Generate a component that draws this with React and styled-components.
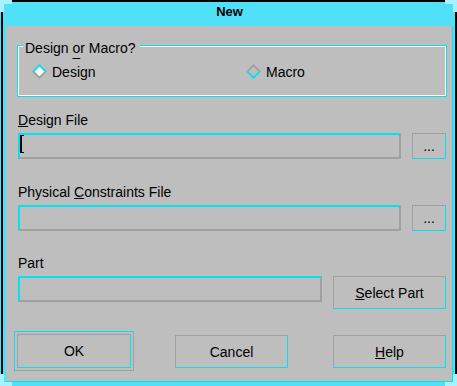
import React from 'react';
import styled, { createGlobalStyle } from 'styled-components';

const CYAN = '#00e4f2';
const TITLE = '#50e0f8';
const GRAY = '#bebebe';
const SHADOW = '#a0a0a0';
const LIGHT = '#a8f2ff';

const Global = createGlobalStyle`
  html, body { margin: 0; padding: 0; background: ${GRAY}; }
  body {
    font-family: "Liberation Sans", Arial, Helvetica, sans-serif;
    font-size: 14px;
    line-height: 16px;
    color: #000;
  }
  * { box-sizing: border-box; }
`;

const Frame = styled.div`
  position: relative;
  width: 457px;
  height: 386px;
  display: flex;
  flex-direction: column;
  padding: 2px 4px 4px 6px;
  background:
    linear-gradient(#000, #000) left 0 top 0 / 100% 2px no-repeat,
    linear-gradient(#000, #000) left 1px top 0 / 2px 100% no-repeat,
    linear-gradient(#000, #000) right 0 top 0 / 2px 100% no-repeat,
    ${TITLE};
`;

const Corner = styled.span`
  position: absolute;
  width: 12px;
  height: 12px;
  ${(p) => p.$v}: 0;
  ${(p) => p.$h}: 0;
  border-${(p) => p.$v}: 4px solid ${LIGHT};
  border-${(p) => p.$h}: 4px solid ${LIGHT};
`;

const TitleBar = styled.div`
  height: 24px;
  display: flex;
  justify-content: center;
  padding-top: 2px;
  font-size: 13px;
  font-weight: bold;
`;

const Body = styled.div`
  flex: 1;
  display: flex;
  flex-direction: column;
  background: ${GRAY};
  padding: 19px 6px 0 12px;
  border-right: 1px solid ${CYAN};
  border-bottom: 1px solid ${CYAN};
`;

const Group = styled.div`
  position: relative;
  margin: 0 -1px 0 -1px;
  border: 1px solid ${CYAN};
  box-shadow: inset 0 0 0 1px #fff;
  padding: 18px 0 16px 14px;
  display: grid;
  grid-template-columns: 214px 1fr;
`;

const Legend = styled.span`
  position: absolute;
  top: -6px;
  left: 5px;
  padding: 0 4px 0 2px;
  background: ${GRAY};
  white-space: nowrap;
`;

const Radio = styled.label`
  display: flex;
  align-items: center;
  gap: 5px;
  height: 16px;
`;

const DiamondSvg = styled.svg`
  display: block;
  margin-bottom: 2px;
  flex: none;
`;

const M = styled.span`
  text-decoration: underline;
  text-decoration-thickness: 1px;
  text-underline-offset: ${(p) => p.$off ?? 1}px;
`;

const Label = styled.div`
  margin-top: ${(p) => p.$top}px;
  height: 16px;
  white-space: nowrap;
`;

const Row = styled.div`
  margin-top: 5px;
  display: flex;
  align-items: flex-start;
  gap: 11px;
`;

const Field = styled.div`
  flex: 1;
  height: 26px;
  border-style: solid;
  border-width: 2px;
  border-color: ${CYAN} ${SHADOW} ${SHADOW} ${CYAN};
  background: ${GRAY};
  padding-left: 0;
`;

const Caret = styled.span`
  display: block;
  width: 4px;
  height: 18px;
  border-left: 2px solid #000;
  border-top: 1px solid #000;
  border-bottom: 1px solid #000;
`;

const Button = styled.button`
  flex: none;
  width: ${(p) => p.$w}px;
  height: ${(p) => p.$h}px;
  margin: ${(p) => p.$mt || 0}px 0 0 0;
  padding: 0;
  border-style: solid;
  border-width: 1px;
  border-color: ${SHADOW} ${CYAN} ${CYAN} ${SHADOW};
  background: ${GRAY};
  font-family: inherit;
  font-size: 14px;
  line-height: 16px;
  color: #000;
  display: flex;
  align-items: center;
  justify-content: center;
`;

const Actions = styled.div`
  margin: 22px 0 0 -4px;
  display: flex;
  align-items: flex-start;
`;

const DefaultRing = styled.div`
  flex: none;
  padding: 2px;
  border-style: solid;
  border-width: 1px;
  border-color: ${CYAN} ${SHADOW} ${SHADOW} ${CYAN};
  margin-right: 41px;
`;

const Spacer = styled.div`
  width: ${(p) => p.$w}px;
  flex: none;
`;

const Diamond = ({ on }) => (
  <DiamondSvg viewBox="0 0 15 15" width="15" height="15">
    <polygon points="0,7.5 7.5,0 15,7.5 12.2,7.5 7.5,2.8 2.8,7.5" fill={on ? CYAN : SHADOW} />
    <polygon points="0,7.5 7.5,15 15,7.5 12.2,7.5 7.5,12.2 2.8,7.5" fill={on ? SHADOW : CYAN} />
    <polygon points="7.5,2.8 12.2,7.5 7.5,12.2 2.8,7.5" fill={on ? '#fff' : GRAY} />
  </DiamondSvg>
);

export default function App() {
  return (
    <>
      <Global />
      <Frame>
        <Corner $v="top" $h="left" />
        <Corner $v="top" $h="right" />
        <Corner $v="bottom" $h="left" />
        <Corner $v="bottom" $h="right" />
        <TitleBar>New</TitleBar>
        <Body>
          <Group>
            <Legend>
              Design <M $off={5}>o</M>r Macro?
            </Legend>
            <Radio>
              <Diamond on />
              Design
            </Radio>
            <Radio>
              <Diamond />
              Macro
            </Radio>
          </Group>

          <Label $top={15}>
            <M>D</M>esign File
          </Label>
          <Row>
            <Field>
              <Caret />
            </Field>
            <Button $w={34} $h={26}>...</Button>
          </Row>

          <Label $top={25}>
            Physical <M>C</M>onstraints File
          </Label>
          <Row>
            <Field />
            <Button $w={34} $h={26}>...</Button>
          </Row>

          <Label $top={24}>Part</Label>
          <Row>
            <Field />
            <Button $w={113} $h={33}>
              <span>
                <M>S</M>elect Part
              </span>
            </Button>
          </Row>

          <Actions>
            <DefaultRing>
              <Button $w={114} $h={34}>OK</Button>
            </DefaultRing>
            <Button $w={113} $h={33} $mt={4}>Cancel</Button>
            <Spacer $w={45} />
            <Button $w={113} $h={33} $mt={4}>
              <span>
                <M>H</M>elp
              </span>
            </Button>
          </Actions>
        </Body>
      </Frame>
    </>
  );
}
